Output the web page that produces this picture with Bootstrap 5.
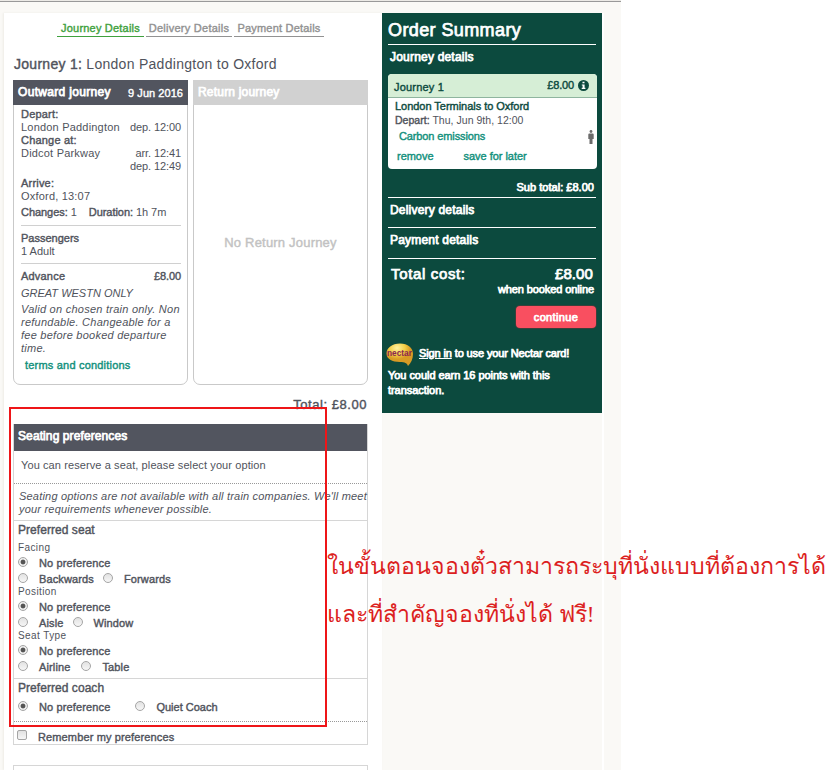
<!DOCTYPE html>
<html lang="en">
<head>
    <meta charset="UTF-8">
    <meta name="viewport" content="width=device-width, initial-scale=1.0">
    <title>Journey Details</title>
    <link href="https://cdn.jsdelivr.net/npm/bootstrap@5.3.0/dist/css/bootstrap.min.css" rel="stylesheet">
    <style>
        body {
            font-family: "Liberation Sans", Arial, sans-serif;
            font-size: 11px;
            line-height: 13px;
            letter-spacing: .2px;
            color: #50535c;
            white-space: nowrap;
        }
        .site { width: 621px; height: 770px; background: #faf9f6; overflow: hidden; }
        .topline { height: 2px; background: #eceae6; border-bottom: 1px solid #999; margin-bottom: 11px; }
        .main-col { width: 378px; margin-left: 4px; padding: 0 14px 0 9px; height: 757px; background: #fff; box-shadow: -1px 0 2px #eeece6; overflow: hidden; }
        .side-col { width: 222px; border-right: 2px solid #fff; height: 757px; }
        .semi { -webkit-text-stroke: .4px currentColor; }
        .heavy { -webkit-text-stroke: .75px currentColor; }
        .teal { color: #12907c; text-decoration: none; }

        /* progress steps */
        .steps { padding: 9px 0 0 44px; gap: 2px; }
        .steps a { color: #929292; text-decoration: none; border-bottom: 1px solid #929292; height: 15px; text-align: center; }
        .steps a.current { color: #3fa13d; border-color: #3fa13d; }
        .w-a { width: 87px; }
        .w-b { width: 86px; }
        .w-c { width: 90px; }
        .w-b { letter-spacing: .25px; }
        .route { font-size: 14px; line-height: 18px; letter-spacing: .28px; padding: 18px 0 0 1px; height: 43px; }

        /* tickets */
        .ticket { width: 175px; height: 305px; border: 1px solid #c9c9c9; border-radius: 0 0 7px 7px; }
        .ticket-head { height: 25px; margin: -1px -1px 0; padding: 0 5px; background: #52555f; color: #fff; }
        .ticket-head b { font-size: 12px; font-weight: 400; letter-spacing: .32px; }
        .ticket-head span { letter-spacing: .05px; padding-top: 1px; }
        .ticket-head.off { background: #d1d1d1; }
        .ticket-head.off b { letter-spacing: .2px; }
        .ticket-body { padding: 3px 6px 0 7px; }
        .times { letter-spacing: -.1px; }
        .rule { border-top: 1px solid #d0d0d0; }
        .arrive { margin-top: 4px; }
        .changes { gap: 12px; margin-top: 3px; letter-spacing: -.05px; }
        .people { margin-top: 6px; padding-top: 6px; height: 38px; letter-spacing: 0; }
        .fare { padding-top: 6px; }
        .operator { margin: 4px 0 3px; letter-spacing: 0; }
        .terms-text { letter-spacing: .25px; }
        .terms { display: block; margin: 4px 0 0 4px; }
        .no-return { font-size: 13px; color: #c2c2c2; padding-top: 131px; }
        .total { font-size: 13px; letter-spacing: .55px; line-height: 15px; padding: 12px 1px 0 0; height: 39px; }

        /* seating preferences */
        .prefs { width: 355px; height: 321px; border: 1px solid #d6d6d6; }
        .prefs-head { height: 27px; margin-top: -1px; padding: 6px 4px; background: #52555f; color: #fff; font-size: 12px; letter-spacing: .1px; }
        .dots { border-bottom: 1px dotted #999; }
        .reserve { height: 33px; padding: 8px 7px; letter-spacing: .1px; }
        .note { height: 37px; padding: 6px 5px; border-bottom: 1px solid #d6d6d6; }
        .seat { height: 158px; padding: 3px 4px; border-bottom: 1px solid #d6d6d6; }
        .coach { height: 43px; padding: 3px 4px; }
        .sub-title { font-size: 12px; letter-spacing: .05px; }
        .tiny { font-size: 10px; line-height: 12px; letter-spacing: .4px; }
        .facing { margin-top: 5px; }
        .choice { height: 16px; letter-spacing: .13px; }
        .choice label { display: flex; line-height: 18px; }
        .choice input {
            appearance: none;
            width: 10px;
            height: 10px;
            margin: 3px 11px 0 0;
            border: 1px solid #a5a5a5;
            border-radius: 50%;
            background: linear-gradient(#e2e2e2, #f6f6f6);
        }
        .choice input:checked { background: radial-gradient(circle, #555 0 2px, #eee 2.8px); }
        .choice input[type=checkbox] { border-radius: 2px; margin-top: 2px; }
        .second { margin-left: 9px; }
        .second-wide { margin-left: 11px; }
        .quiet { margin-left: 25px; letter-spacing: 0; }
        .coach .choice { margin-top: 3px; }
        .remember { padding: 6px 3px; }
        .next-box { margin-top: 20px; }

        /* order summary */
        .order { width: 220px; height: 400px; padding: 0 6px; background: #0c4a3e; color: #fff; }
        .order h1 { font-size: 18px; line-height: 22px; letter-spacing: .4px; height: 32px; padding-top: 6px; margin: 0; border-bottom: 1px solid #fff; }
        .sect { font-size: 12px; letter-spacing: .2px; border-bottom: 1px solid #fff; padding: 6px 2px 0; width: 208px; }
        .first-sect { height: 29px; }
        .basket { width: 209px; height: 95px; background: #fff; border-radius: 4px; color: #0c4a3e; }
        .basket-head { height: 24px; background: #d6eed6; border-bottom: 1px solid #8fb59f; border-radius: 4px 4px 0 0; padding: 0 8px 0 6px; }
        .basket-head > span:first-child { padding-top: 3px; }
        .basket-head > span:last-child { letter-spacing: -.15px; }
        .basket-body { padding: 2px 3px 0 7px; letter-spacing: -.03px; }
        .depart { margin-top: 1px; font-size: 10.5px; letter-spacing: .03px; color: #50535c; }
        .emissions { margin: 3px 0 0 4px; height: 20px; letter-spacing: -.12px; }
        .links { gap: 30px; padding-left: 2px; }
        .subtotal { height: 29px; padding: 12px 2px 0 0; letter-spacing: .03px; border-bottom: 1px solid #fff; width: 208px; }
        .delivery { height: 30px; }
        .payment { height: 31px; }
        .cost { font-size: 15px; line-height: 18px; letter-spacing: .65px; padding: 6px 3px 0; }
        .cost span:last-child { letter-spacing: .1px; }
        .online { padding-right: 2px; margin-bottom: 10px; letter-spacing: -.1px; }
        .go { width: 80px; height: 22px; line-height: 20px; padding: 0; border: 0; border-radius: 4px; background: #f94f60; color: #fff; font-size: 11px; letter-spacing: .35px; box-shadow: 0 0 0 1px #3c3f3a; }
        .nectar { margin: 15px 0 1px -2px; }
        .nectar-text { line-height: 15px; letter-spacing: -.05px; }
        .sign { padding: 3px 0 0 5px; letter-spacing: -.12px; }

        /* annotation over the page */
        .marker { position: absolute; left: 9px; top: 407px; width: 318px; height: 320px; border: 2px solid #ee1518; }
        .remark { position: absolute; left: 327px; top: 542px; color: #dc1f1f; font-family: "Liberation Serif", "Angsana New", serif; font-size: 23.1px; line-height: 48px; letter-spacing: 0; }
    </style>
</head>
<body>
    <div class="site">
        <div class="topline"></div>
        <div class="d-flex">
            <main class="main-col">
                <nav class="steps d-flex semi">
                    <a class="current w-a" href="#">Journey Details</a>
                    <a class="w-b" href="#">Delivery Details</a>
                    <a class="w-c" href="#">Payment Details</a>
                </nav>
                <div class="route"><span class="semi">Journey 1:</span> London Paddington to Oxford</div>

                <div class="d-flex justify-content-between">
                    <section class="ticket">
                        <div class="ticket-head d-flex justify-content-between align-items-center">
                            <b class="heavy">Outward journey</b>
                            <span class="semi">9 Jun 2016</span>
                        </div>
                        <div class="ticket-body">
                            <div class="semi">Depart:</div>
                            <div class="d-flex justify-content-between"><span>London Paddington</span><span class="times">dep. 12:00</span></div>
                            <div class="semi">Change at:</div>
                            <div class="d-flex justify-content-between"><span>Didcot Parkway</span><span class="times">arr. 12:41</span></div>
                            <div class="text-end times">dep. 12:49</div>
                            <div class="semi arrive">Arrive:</div>
                            <div>Oxford, 13:07</div>
                            <div class="d-flex changes"><span><span class="semi">Changes:</span> 1</span><span><span class="semi">Duration:</span> 1h 7m</span></div>
                            <div class="rule people">
                                <div class="semi">Passengers</div>
                                <div>1 Adult</div>
                            </div>
                            <div class="rule fare">
                                <div class="d-flex justify-content-between semi"><span>Advance</span><span class="times">£8.00</span></div>
                                <div class="fst-italic operator">GREAT WESTN ONLY</div>
                                <div class="fst-italic terms-text">Valid on chosen train only. Non<br>refundable. Changeable for a<br>fee before booked departure<br>time.</div>
                                <a class="teal semi terms" href="#">terms and conditions</a>
                            </div>
                        </div>
                    </section>
                    <section class="ticket">
                        <div class="ticket-head off d-flex align-items-center"><b class="heavy">Return journey</b></div>
                        <div class="no-return semi text-center">No Return Journey</div>
                    </section>
                </div>
                <div class="total semi text-end">Total: £8.00</div>

                <section class="prefs">
                    <div class="prefs-head heavy">Seating preferences</div>
                    <div class="reserve dots">You can reserve a seat, please select your option</div>
                    <div class="note fst-italic">Seating options are not available with all train companies. We'll meet<br>your requirements whenever possible.</div>
                    <div class="seat">
                        <div class="sub-title semi">Preferred seat</div>
                        <div class="tiny facing">Facing</div>
                        <div class="choice semi"><label><input type="radio" name="facing" checked>No preference</label></div>
                        <div class="choice semi d-flex"><label><input type="radio" name="facing">Backwards</label><label class="second"><input type="radio" name="facing">Forwards</label></div>
                        <div class="tiny">Position</div>
                        <div class="choice semi"><label><input type="radio" name="position" checked>No preference</label></div>
                        <div class="choice semi d-flex"><label><input type="radio" name="position">Aisle</label><label class="second"><input type="radio" name="position">Window</label></div>
                        <div class="tiny">Seat Type</div>
                        <div class="choice semi"><label><input type="radio" name="type" checked>No preference</label></div>
                        <div class="choice semi d-flex"><label><input type="radio" name="type">Airline</label><label class="second-wide"><input type="radio" name="type">Table</label></div>
                    </div>
                    <div class="coach dots">
                        <div class="sub-title semi">Preferred coach</div>
                        <div class="choice semi d-flex"><label><input type="radio" name="coach" checked>No preference</label><label class="quiet"><input type="radio" name="coach">Quiet Coach</label></div>
                    </div>
                    <div class="choice semi remember"><label><input type="checkbox">Remember my preferences</label></div>
                </section>
                <div class="prefs next-box"></div>
            </main>

            <aside class="side-col">
                <div class="order">
                    <h1 class="heavy">Order Summary</h1>
                    <div class="sect heavy border-0 first-sect">Journey details</div>
                    <div class="basket">
                        <div class="basket-head d-flex justify-content-between align-items-center semi">
                            <span>Journey 1</span>
                            <span class="d-flex align-items-center">£8.00
                                <svg class="ms-1" width="11" height="11" viewBox="0 0 11 11"><circle cx="5.5" cy="5.5" r="5.5" fill="#0c4a3e"/><path d="M4.5 1.7h2v1.6h-2zM3.8 4.4h2.8v3.4h.8v1.2H3.7V7.8h.9V5.500h-.8z" fill="#fff"/></svg>
                            </span>
                        </div>
                        <div class="basket-body">
                            <div class="semi">London Terminals to Oxford</div>
                            <div class="depart"><span class="semi">Depart:</span> Thu, Jun 9th, 12:00</div>
                            <div class="d-flex justify-content-between emissions">
                                <a class="teal semi" href="#">Carbon emissions</a>
                                <svg width="6" height="15" viewBox="0 0 6 15" fill="#6b6b6b"><circle cx="3" cy="1.5" r="1.4"/><path d="M1.300 3.500h3.400q1 0 1 1V9H4.500v5H1.500V9H.3V4.500q0-1 1-1z"/></svg>
                            </div>
                            <div class="d-flex links"><a class="teal semi" href="#">remove</a><a class="teal semi" href="#">save for later</a></div>
                        </div>
                    </div>
                    <div class="subtotal heavy text-end">Sub total: £8.00</div>
                    <div class="sect heavy delivery">Delivery details</div>
                    <div class="sect heavy payment">Payment details</div>
                    <div class="cost heavy d-flex justify-content-between"><span>Total cost:</span><span>£8.00</span></div>
                    <div class="heavy text-end online">when booked online</div>
                    <div class="text-end"><button class="go btn heavy" type="button">continue</button></div>
                    <div class="d-flex nectar">
                        <svg width="28" height="24" viewBox="0 0 28 24">
                            <defs><radialGradient id="gold" cx=".4" cy=".2"><stop offset="0" stop-color="#fff3a0"/><stop offset=".6" stop-color="#f3cd45"/><stop offset="1" stop-color="#d89a25"/></radialGradient></defs>
                            <path d="M14 .5C22 .5 27 5 27 11c0 5-2 9-5 12-1-3-3-4-8-4C6 19 .5 16 .5 10.500S6 .5 14 .5z" fill="url(#gold)"/>
                            <text x="1" y="13" font-size="8.500" font-weight="700" fill="#8a2850" letter-spacing="0" textLength="25" lengthAdjust="spacingAndGlyphs">nectar</text>
                        </svg>
                        <div class="nectar-text heavy sign"><u>Sign in</u> to use your Nectar card!</div>
                    </div>
                    <div class="nectar-text heavy">You could earn 16 points with this<br>transaction.</div>
                </div>
            </aside>
        </div>
    </div>

    <div class="marker"></div>
    <div class="remark" lang="th">ในขั้นตอนจองตั๋วสามารถระบุที่นั่งแบบที่ต้องการได้<br>และที่สำคัญจองที่นั่งได้ ฟรี!</div>

    <script src="https://cdn.jsdelivr.net/npm/bootstrap@5.3.0/dist/js/bootstrap.bundle.min.js"></script>
</body>
</html>
